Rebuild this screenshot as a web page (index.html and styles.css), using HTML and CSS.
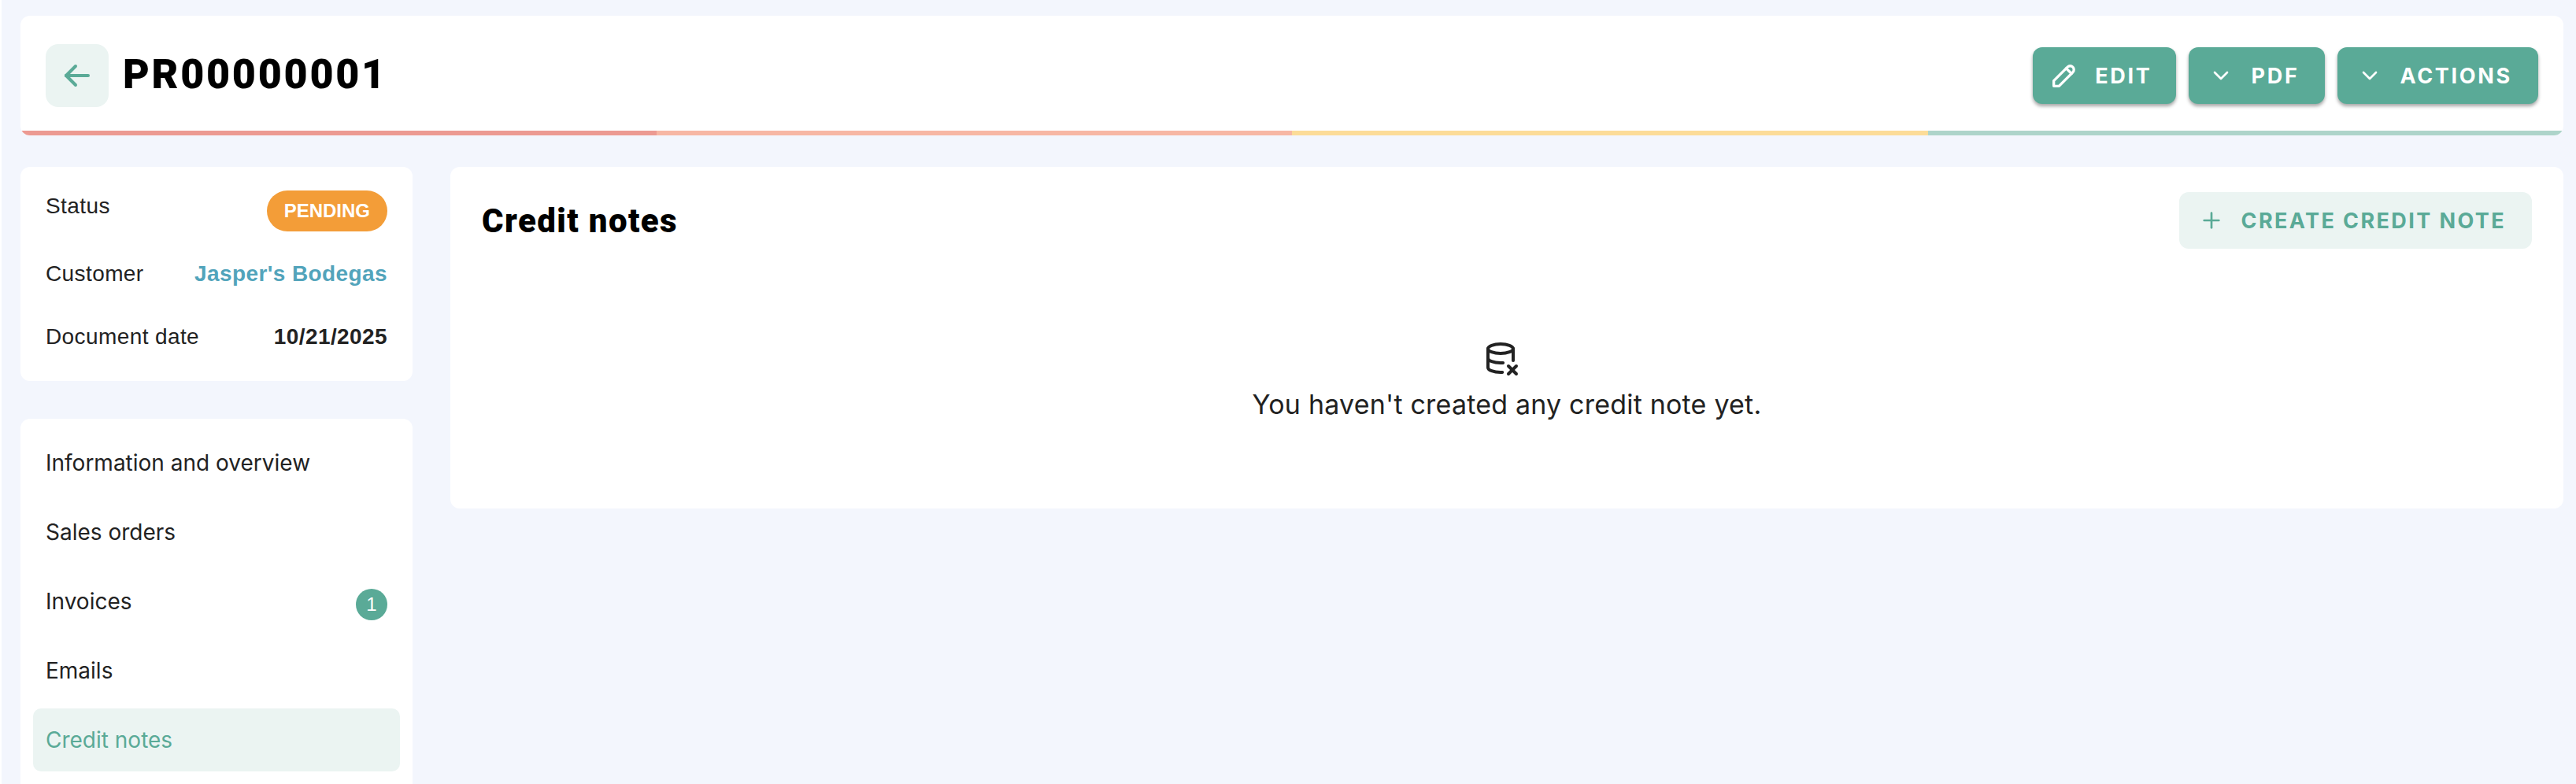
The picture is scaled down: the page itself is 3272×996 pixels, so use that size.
FILE: index.html
```html
<!DOCTYPE html>
<html lang="en">
<head>
    <meta charset="UTF-8">
    <meta name="viewport" content="width=device-width, initial-scale=1.0">
    <title>PR00000001</title>
    <link rel="stylesheet" href="styles.css">
</head>
<body>

<div class="page">
    <header class="doc-header">
        <div class="doc-header-main">
            <div class="doc-title">
                <a class="back-button" href="#">
                    <svg class="icon-48" viewBox="0 0 24 24"><path d="M5 12l14 0"/><path d="M5 12l6 6"/><path d="M5 12l6 -6"/></svg>
                </a>
                <h1>PR00000001</h1>
            </div>
            <div class="doc-actions">
                <button class="btn btn-edit">
                    <svg class="icon-40" viewBox="0 0 24 24"><path d="M4 20h4l10.5 -10.5a2.828 2.828 0 1 0 -4 -4l-10.5 10.5v4"/><path d="M13.5 6.5l4 4"/></svg>
                    EDIT
                </button>
                <button class="btn">
                    <svg class="icon-32" viewBox="0 0 24 24"><path d="M6 9l6 6l6 -6"/></svg>
                    PDF
                </button>
                <button class="btn">
                    <svg class="icon-32" viewBox="0 0 24 24"><path d="M6 9l6 6l6 -6"/></svg>
                    ACTIONS
                </button>
            </div>
        </div>
        <div class="progress">
            <span class="progress-red"></span>
            <span class="progress-salmon"></span>
            <span class="progress-yellow"></span>
            <span class="progress-green"></span>
        </div>
    </header>

    <div class="content">
        <aside class="sidebar">
            <div class="card summary">
                <div class="summary-row summary-status">
                    <span>Status</span>
                    <span class="pill">PENDING</span>
                </div>
                <div class="summary-row">
                    <span>Customer</span>
                    <a class="summary-link" href="#">Jasper's Bodegas</a>
                </div>
                <div class="summary-row">
                    <span>Document date</span>
                    <strong>10/21/2025</strong>
                </div>
            </div>

            <nav class="card side-nav">
                <a class="nav-item" href="#">Information and overview</a>
                <a class="nav-item" href="#">Sales orders</a>
                <a class="nav-item" href="#">Invoices <span class="count">1</span></a>
                <a class="nav-item" href="#">Emails</a>
                <a class="nav-item active" href="#">Credit notes</a>
            </nav>
        </aside>

        <main class="card panel">
            <div class="panel-head">
                <h2>Credit notes</h2>
                <button class="btn btn-light">
                    <svg class="icon-32" viewBox="0 0 24 24"><path d="M12 5l0 14"/><path d="M5 12l14 0"/></svg>
                    CREATE CREDIT NOTE
                </button>
            </div>
            <div class="empty">
                <svg class="icon-48 empty-icon" viewBox="0 0 24 24"><path d="M4 6c0 1.657 3.582 3 8 3s8 -1.343 8 -3s-3.582 -3 -8 -3s-8 1.343 -8 3"/><path d="M4 6v6c0 1.657 3.582 3 8 3c.537 0 1.062 -.02 1.57 -.058"/><path d="M20 13.5v-7.5"/><path d="M4 12v6c0 1.657 3.582 3 8 3c.384 0 .762 -.01 1.132 -.03"/><path d="M22 22l-5 -5"/><path d="M17 22l5 -5"/></svg>
                <p>You haven't created any credit note yet.</p>
            </div>
        </main>
    </div>
</div>

</body>
</html>
```

FILE: styles.css
```css
html, body {
    margin: 0;
    height: 996px;
    overflow: hidden;
    background-color: #ffffff;
}
body {
    padding-left: 2px;
    font-family: 'Inter', sans-serif;
    color: #222222;
    box-sizing: border-box;
}
a {
    text-decoration: none;
    color: inherit;
}
svg {
    fill: none;
    stroke: currentColor;
    stroke-width: 2;
    stroke-linecap: round;
    stroke-linejoin: round;
    flex-shrink: 0;
}
.icon-48 { width: 48px; height: 48px; }
.icon-40 { width: 40px; height: 40px; }
.icon-32 { width: 32px; height: 32px; }

.page {
    height: 996px;
    padding: 20px 16px 0 24px;
    box-sizing: border-box;
    background-color: #f3f6fd;
    overflow: hidden;
}
.card {
    background: #ffffff;
    border-radius: 12px;
}

/* Cabecera */
.doc-header {
    background: #ffffff;
    border-radius: 12px;
    overflow: hidden;
    margin-bottom: 40px;
}
.doc-header-main {
    height: 146px;
    display: flex;
    align-items: center;
    justify-content: space-between;
    padding: 6px 32px 0;
    box-sizing: border-box;
}
.doc-title {
    display: flex;
    align-items: center;
    gap: 18px;
}
.doc-title h1 {
    margin: 0 0 4px;
    font-family: 'Roboto', sans-serif;
    font-size: 52px;
    font-weight: 900;
    letter-spacing: 2.7px;
    color: #000000;
}
.back-button {
    width: 80px;
    height: 80px;
    display: flex;
    align-items: center;
    justify-content: center;
    border-radius: 16px;
    background-color: #ebf4f2;
    color: #5aaa97;
}
.doc-actions {
    display: flex;
    gap: 16px;
}
.progress {
    display: grid;
    grid-template-columns: repeat(4, 1fr);
    height: 6px;
}
.progress-red { background-color: #ec9a92; }
.progress-salmon { background-color: #f7b7a4; }
.progress-yellow { background-color: #fcdc98; }
.progress-green { background-color: #add4ca; }

/* Botones */
.btn {
    height: 72px;
    padding: 0 33px 0 25px;
    display: flex;
    align-items: center;
    gap: 22px;
    border: 0;
    border-radius: 12px;
    font-family: 'Inter', sans-serif;
    font-size: 27px;
    font-weight: 700;
    letter-spacing: 2.7px;
    white-space: nowrap;
    background-color: #5aaa97;
    color: #ffffff;
    box-shadow: 0 3px 4px rgba(0, 0, 0, 0.35);
}
.btn-edit {
    padding: 0 31px 0 20px;
    gap: 19px;
}
.btn-light {
    background-color: #ebf4f2;
    color: #5aaa97;
    box-shadow: none;
    letter-spacing: 2.4px;
}

/* Columna lateral */
.content {
    display: flex;
    align-items: flex-start;
    gap: 48px;
}
.sidebar {
    width: 498px;
    flex-shrink: 0;
    display: flex;
    flex-direction: column;
    gap: 48px;
}
.summary {
    height: 272px;
    padding: 30px 32px 0;
    box-sizing: border-box;
    font-family: 'Liberation Sans', sans-serif;
    font-size: 28px;
    letter-spacing: 0.4px;
}
.summary-row {
    display: flex;
    justify-content: space-between;
    align-items: center;
    height: 52px;
    margin-bottom: 28px;
}
.summary-status {
    align-items: flex-start;
    line-height: 40px;
}
.summary-link {
    font-weight: 700;
    color: #52a4bb;
}
.pill {
    height: 52px;
    line-height: 52px;
    padding: 0 22px;
    border-radius: 26px;
    background-color: #f39d38;
    color: #ffffff;
    font-size: 24px;
    font-weight: 700;
    letter-spacing: 0;
}
.side-nav {
    height: 600px;
    padding: 16px;
    box-sizing: border-box;
    display: flex;
    flex-direction: column;
    gap: 8px;
}
.nav-item {
    height: 80px;
    flex-shrink: 0;
    padding: 0 16px;
    display: flex;
    align-items: center;
    justify-content: space-between;
    border-radius: 10px;
    font-size: 28px;
    font-weight: 400;
    color: #222222;
}
.nav-item.active {
    background-color: #ebf4f2;
    color: #5aaa97;
}
.count {
    width: 40px;
    height: 40px;
    margin-top: 8px;
    border-radius: 50%;
    display: flex;
    align-items: center;
    justify-content: center;
    background-color: #5aaa97;
    color: #ffffff;
    font-family: 'Liberation Sans', sans-serif;
    font-size: 24px;
    font-weight: 400;
}

/* Panel principal */
.panel {
    flex: 1;
    height: 434px;
    box-sizing: border-box;
    padding: 32px 40px 0;
}
.panel-head {
    display: flex;
    align-items: center;
    justify-content: space-between;
}
.panel-head h2 {
    margin: 0;
    font-family: 'Roboto', sans-serif;
    font-size: 42px;
    font-weight: 900;
    letter-spacing: 1.4px;
    color: #000000;
}
.empty {
    margin-top: 115px;
    display: flex;
    flex-direction: column;
    align-items: center;
}
.empty-icon {
    margin-right: 16px;
}
.empty p {
    margin: 14px 0 0;
    font-size: 34px;
    font-weight: 400;
    letter-spacing: 0.2px;
}
```
